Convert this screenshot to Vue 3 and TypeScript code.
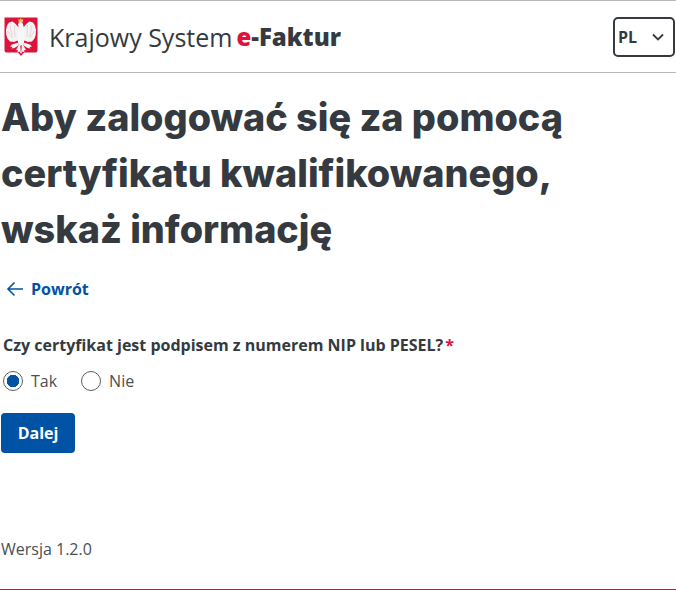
<script setup lang="ts">
import { ref } from 'vue'

const answer = ref('tak')
const options = [
  { value: 'tak', label: 'Tak' },
  { value: 'nie', label: 'Nie' },
]
</script>

<template>
  <div class="page">
    <header class="topbar">
      <div class="brand">
        <svg class="emblem" viewBox="0 0 34 40" aria-hidden="true">
          <path d="M0.500 0.500h33v33q0 2-2 2H20l-3 3.500-3-3.500H2.500q-2 0-2-2z" fill="#dc143c" />
          <defs>
            <g id="half">
              <path d="M15 12Q13 7 8.500 4.500L5 5.500 3 8.500 2 13l.3 5 1.200 3.500L6 24.500l4 .5 3.500-1.500L15 26z" fill="#f3f3f3" />
              <path d="M6 8.500l2.500 11M3.500 14l5 7M10.500 8l.5 12" stroke="#e3b8bd" stroke-width=".5" fill="none" />
              <path d="M14.500 25.500L8 27.500l-2 2 2.500.5-1 1.500 3-.5L15 28z" fill="#f3f3f3" />
              <path d="M16 26l-4 7 2 .3-.5 2 2-.8 1.500 2.500z" fill="#f3f3f3" />
            </g>
          </defs>
          <use href="#half" />
          <use href="#half" transform="matrix(-1 0 0 1 34 0)" />
          <path d="M14 26V11q1-5 3-5t3 5v15l-3 3z" fill="#f7f7f7" />
          <circle cx="16.500" cy="7.500" r="2.400" fill="#f7f7f7" />
          <path d="M14.500 5V1.800l1.200 1L16.800 1l1.100 1.800 1.200-1V5z" fill="#f0bd45" />
        </svg>
        <span class="brand-name">Krajowy System</span>
        <span class="brand-product"><span class="brand-e">e</span>-Faktur</span>
      </div>
      <button class="lang" type="button">
        <span>PL</span>
        <svg class="chevron" viewBox="0 0 12 8" aria-hidden="true">
          <path d="M1 1.500l5 5 5-5" fill="none" stroke="currentColor" stroke-width="1.800" />
        </svg>
      </button>
    </header>

    <main class="content">
      <h1 class="title">Aby zalogować się za pomocą certyfikatu kwalifikowanego, wskaż informację</h1>

      <a class="back" href="#">
        <svg class="back-icon" viewBox="0 0 18 16" aria-hidden="true">
          <path d="M17 8H2M8.500 1.500L2 8l6.500 6.500" fill="none" stroke="currentColor" stroke-width="1.600" />
        </svg>
        Powrót
      </a>

      <form class="form" @submit.prevent>
        <p class="question">Czy certyfikat jest podpisem z numerem NIP lub PESEL?<span class="required">*</span></p>
        <div class="radios">
          <label v-for="opt in options" :key="opt.value" class="radio">
            <input v-model="answer" class="radio-input" type="radio" name="cert" :value="opt.value" />
            <span class="radio-mark"></span>
            {{ opt.label }}
          </label>
        </div>
        <button class="submit" type="submit">Dalej</button>
      </form>
    </main>

    <footer class="footer">Wersja 1.2.0</footer>
  </div>
</template>

<style>
html,
body {
  margin: 0;
  background: #fff;
}
</style>

<style scoped>
.page {
  display: flex;
  flex-direction: column;
  box-sizing: border-box;
  height: 590px;
  overflow: hidden;
  border-top: 1px solid #bababa;
  border-bottom: 1px solid #c0143c;
  font-family: "Open Sans", sans-serif;
  color: #343a40;
}

.topbar {
  display: flex;
  align-items: center;
  justify-content: space-between;
  box-sizing: border-box;
  height: 72px;
  padding: 0 1px 0 4px;
  border-bottom: 1px solid #bababa;
}

.brand {
  display: flex;
  align-items: center;
}

.emblem {
  width: 34px;
  height: 40px;
  margin-right: 11px;
}

.brand-name {
  font-size: 25px;
  margin-right: 4px;
}

.brand-product {
  font-size: 24px;
  font-weight: 800;
}

.brand-e {
  color: #dc143c;
}

.lang {
  display: flex;
  align-items: center;
  justify-content: space-between;
  box-sizing: border-box;
  width: 62px;
  height: 40px;
  padding: 0 9px 0 3px;
  background: #fff;
  border: 2px solid #343a40;
  border-radius: 5px;
  color: #343a40;
  font-family: inherit;
  font-size: 16px;
  font-weight: 700;
}

.chevron {
  width: 12px;
  height: 8px;
}

.content {
  flex: 1;
  padding: 0 1px;
}

.title {
  margin: 16px 0 0;
  font-family: Inter, sans-serif;
  font-size: 37.800px;
  font-weight: 800;
  line-height: 56px;
  color: #343a40;
}

.back {
  display: flex;
  align-items: center;
  gap: 7px;
  margin: 21px 0 0 5px;
  color: #0052a5;
  font-size: 16px;
  font-weight: 700;
  text-decoration: none;
}

.back-icon {
  width: 18px;
  height: 16px;
}

.form {
  margin-top: 33px;
  padding-left: 2px;
}

.question {
  margin: 0;
  font-size: 16px;
  font-weight: 700;
  line-height: 24px;
}

.required {
  margin-left: 2px;
  color: #dc143c;
}

.radios {
  display: flex;
  gap: 24px;
  margin-top: 12px;
}

.radio {
  display: flex;
  align-items: center;
  gap: 8px;
  font-size: 16px;
  line-height: 24px;
  color: #4a4f54;
}

.radio-input {
  position: absolute;
  opacity: 0;
}

.radio-mark {
  box-sizing: border-box;
  width: 20px;
  height: 20px;
  border: 1px solid #595f64;
  border-radius: 50%;
}

.radio-input:checked + .radio-mark {
  background: radial-gradient(circle, #0052a5 0 6px, transparent 6.5px);
}

.submit {
  display: block;
  width: 74px;
  height: 40px;
  margin: 20px 0 0 -2px;
  background: #0052a5;
  border: 0;
  border-radius: 4px;
  color: #fff;
  font-family: inherit;
  font-size: 16px;
  font-weight: 700;
}

.footer {
  padding: 0 1px 28px;
  font-size: 16px;
  line-height: 24px;
  color: #4a4f54;
}
</style>
